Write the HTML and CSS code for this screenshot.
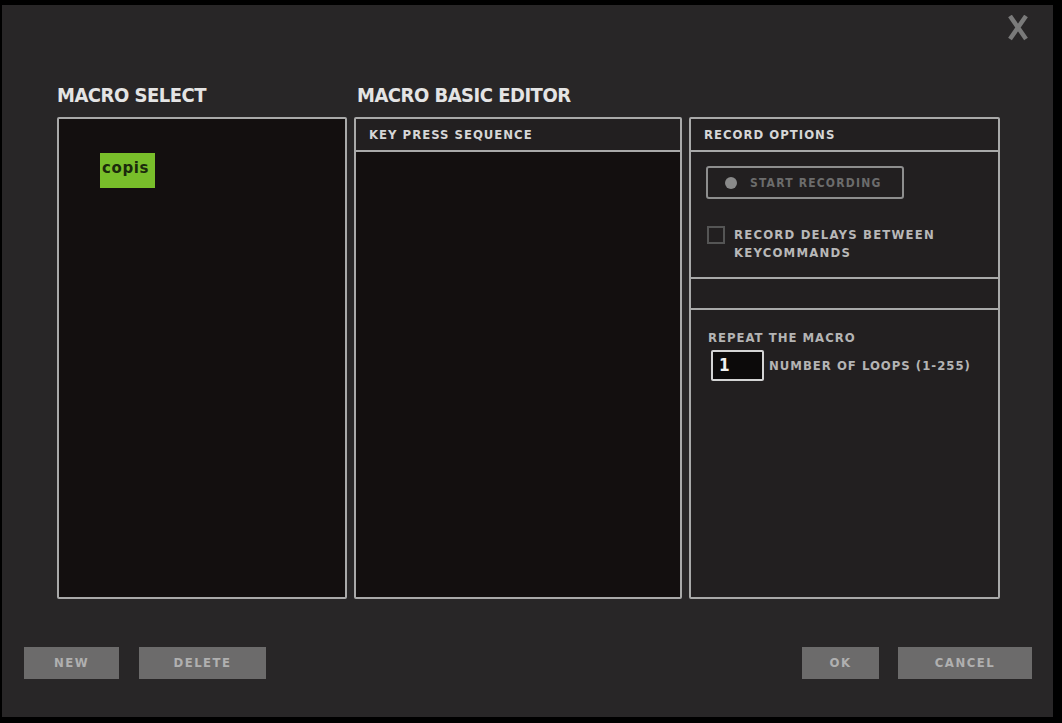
FILE: index.html
```html
<!DOCTYPE html>
<html lang="en">
<head>
    <meta charset="UTF-8">
    <meta name="viewport" content="width=device-width, initial-scale=1.0">
    <title>Macro Editor</title>
    <link rel="stylesheet" href="styles.css">
</head>
<body>
    <div class="window">
        <div class="topbar">
            <svg class="close" width="22" height="26" viewBox="0 0 22 26">
                <path d="M3 1 L19 24 M19 1 L3 24" stroke="#7a7a7a" stroke-width="4.5" fill="none"/>
            </svg>
        </div>

        <div class="editor">
            <div class="label">MACRO SELECT</div>
            <div class="label">MACRO BASIC EDITOR</div>
            <div class="label"></div>

            <div class="panel list">
                <div class="macro-item">copis</div>
            </div>

            <div class="panel sequence">
                <div class="panel-head">KEY PRESS SEQUENCE</div>
                <div class="sequence-body"></div>
            </div>

            <div class="panel options">
                <div class="panel-head">RECORD OPTIONS</div>
                <div class="opt-record">
                    <div class="rec-button"><span class="rec-dot"></span>START RECORDING</div>
                    <label class="check-row">
                        <span class="checkbox"></span>
                        <span>RECORD DELAYS BETWEEN<br>KEYCOMMANDS</span>
                    </label>
                </div>
                <div class="opt-empty"></div>
                <div class="opt-repeat">
                    <div class="repeat-title">REPEAT THE MACRO</div>
                    <div class="loops-row">
                        <div class="loops-input">1</div>
                        <span>NUMBER OF LOOPS (1-255)</span>
                    </div>
                </div>
            </div>
        </div>

        <div class="footer">
            <div class="btn-group">
                <div class="btn btn-new">NEW</div>
                <div class="btn btn-delete">DELETE</div>
            </div>
            <div class="btn-group">
                <div class="btn btn-ok">OK</div>
                <div class="btn btn-cancel">CANCEL</div>
            </div>
        </div>
    </div>
</body>
</html>
```

FILE: styles.css
```css
body { margin: 0; background: #000; font-family: "DejaVu Sans Condensed", "DejaVu Sans", sans-serif; font-weight: bold; }
.window { margin: 5px 9px 0 2px; width: 1051px; height: 712px; background: #282627; box-sizing: border-box; }

.topbar { height: 70px; display: flex; justify-content: flex-end; align-items: flex-start; padding: 10px 24px 0 0; box-sizing: border-box; }
.close { display: block; }

.editor { display: grid; grid-template-columns: 290px 328px 311px; grid-template-rows: 42px 482px; column-gap: 7px; margin-left: 55px; }
.label { color: #e4e4e4; font-size: 20px; line-height: 22px; padding-top: 9px; letter-spacing: -0.5px; }
.label:nth-child(2) { padding-left: 3px; }

.panel { border: 2px solid #a9a9a9; border-radius: 2px; box-sizing: border-box; }
.list { background: #130f0f; padding: 34px 0 0 41px; }
.macro-item { width: 55px; height: 35px; background: #78be2a; color: #1b2a0c; font-family: "DejaVu Sans", sans-serif; font-size: 15px; line-height: 18px; padding: 6px 0 0 2px; box-sizing: border-box; letter-spacing: 0.6px; }

.sequence { display: flex; flex-direction: column; background: #130f0f; }
.panel-head { height: 31px; background: #221f20; border-bottom: 2px solid #a9a9a9; color: #d6d6d6; font-size: 13px; line-height: 31px; padding-left: 13px; letter-spacing: 1px; flex-shrink: 0; }
.sequence-body { flex: 1; }

.options { display: flex; flex-direction: column; background: #221f20; }
.opt-record { height: 127px; border-bottom: 2px solid #a9a9a9; padding: 14px 0 0 15px; box-sizing: border-box; }
.rec-button { width: 198px; height: 33px; border: 2px solid #8e8e8e; border-radius: 3px; box-sizing: border-box; display: flex; align-items: center; color: #6c6c6c; font-size: 12px; padding-left: 17px; letter-spacing: 1.2px; }
.rec-dot { width: 12px; height: 12px; border-radius: 50%; background: #8a8a8a; margin-right: 13px; }
.check-row { display: flex; align-items: flex-start; margin-top: 27px; color: #b8b8b8; font-size: 13px; line-height: 18px; letter-spacing: 1.2px; }
.checkbox { width: 18px; height: 18px; border: 2px solid #555; box-sizing: border-box; margin: 0 9px 0 1px; flex-shrink: 0; }
.opt-empty { height: 29px; border-bottom: 2px solid #a9a9a9; }
.opt-repeat { padding: 20px 0 0 17px; color: #b4b4b4; font-size: 13px; letter-spacing: 1px; }
.repeat-title { line-height: 16px; }
.loops-row { display: flex; align-items: center; margin-top: 4px; }
.loops-input { width: 53px; height: 31px; border: 2px solid #d4d4d4; border-radius: 2px; box-sizing: border-box; background: #0c0a0a; color: #f0f0f0; font-size: 17px; line-height: 27px; padding-left: 6px; margin: 0 5px 0 3px; letter-spacing: 0; }

.footer { display: flex; justify-content: space-between; margin-top: 48px; padding: 0 21px 0 22px; }
.btn-group { display: flex; gap: 20px; }
.btn { height: 32px; background: #6c6b6b; color: #b0b0b0; font-size: 13px; line-height: 32px; text-align: center; letter-spacing: 1.5px; }
.btn-new { width: 95px; }
.btn-delete { width: 127px; }
.btn-ok { width: 77px; }
.btn-cancel { width: 134px; }
.btn-group:last-child { gap: 19px; }
```
